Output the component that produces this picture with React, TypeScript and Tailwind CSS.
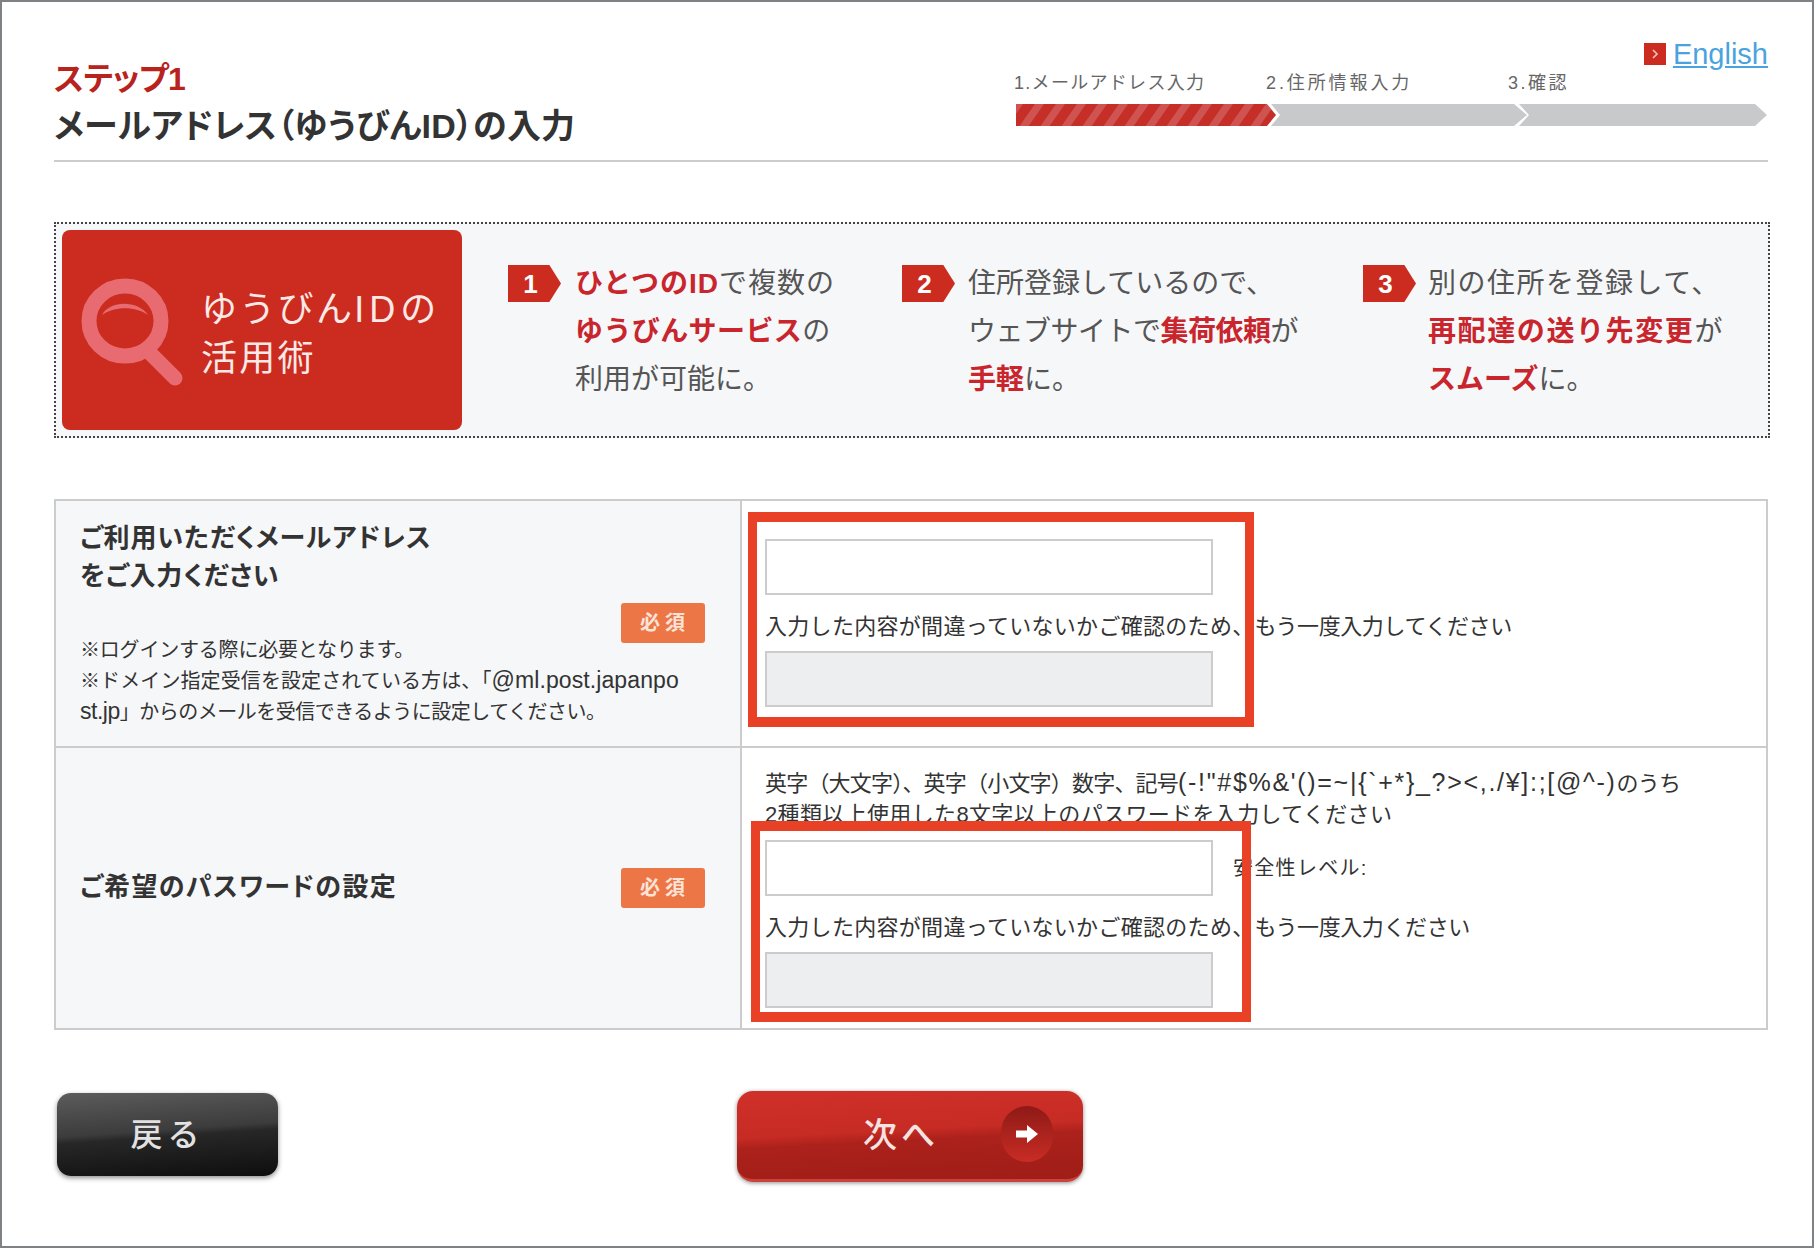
import React from 'react';

const Required = () => (
    <span className="flex w-[84px] h-[40px] items-center justify-center rounded-[3px] bg-[#ec7645] text-[20px] font-bold tracking-[5px] pl-[4px] text-[#fbe3d8]">必須</span>
);

const Num = ({ n }: { n: string }) => (
    <span className="mt-[5px] flex w-[53px] h-[37px] shrink-0 items-center justify-center pr-[8px] bg-[#cb2c1f] text-[26px] font-bold text-white [clip-path:polygon(0_0,78%_0,100%_50%,78%_100%,0_100%)]">{n}</span>
);

const R = ({ children }: { children: React.ReactNode }) => <b className="font-bold text-[#c9252d]">{children}</b>;

const inputBox = "block w-[448px] h-[56px] shrink-0 border-2 border-[#cccccc] bg-white";
const inputGrey = "block w-[448px] h-[56px] border-2 border-[#cccccc] bg-[#edeef0]";

const StepBar = () => (
    <svg width="754" height="22" viewBox="0 0 754 22" className="block">
        <defs>
            <pattern id="hatch" width="21" height="22" patternUnits="userSpaceOnUse" patternTransform="skewX(-35)">
                <rect width="21" height="22" fill="#c62f27" />
                <rect width="9" height="22" fill="#cf5350" />
            </pattern>
        </defs>
        <polygon points="505,0 741,0 753,11 741,22 505,22 515,11" fill="#c8c9cb" />
        <polygon points="257,0 500,0 513,11 500,22 257,22 266,11" fill="#c8c9cb" />
        <polygon points="2,0 253,0 262,11 253,22 2,22" fill="url(#hatch)" />
    </svg>
);

const App = () => {
    return (
        <div className="relative w-[1814px] h-[1248px] overflow-hidden box-border border-2 border-[#7f8284] bg-white pl-[52px] pr-[44px] font-['Liberation_Sans','Noto_Sans_CJK_JP',sans-serif] text-[#333333]">
            <header className="flex justify-between h-[160px] border-b-2 border-[#cccccc]">
                <div className="pt-[57px] [font-feature-settings:'palt']">
                    <div className="text-[32px] leading-[40px] font-bold tracking-[-0.6px] text-[#b8231e]">ステップ1</div>
                    <h1 className="mt-[4px] text-[34px] leading-[46px] font-bold tracking-[0.2px] text-[#333333]">メールアドレス（ゆうびんID）の入力</h1>
                </div>
                <div className="w-[754px] pt-[36px]">
                    <div className="flex h-[32px] items-center justify-end gap-[7px]">
                        <span className="flex w-[22px] h-[22px] items-center justify-center bg-[#cb2c1f]">
                            <svg width="8" height="12" viewBox="0 0 8 12" fill="none" stroke="#f3c3bd" strokeWidth="1.6"><path d="M2 2l4 4-4 4" /></svg>
                        </span>
                        <a className="text-[29px] leading-[32px] text-[#4aa3df] underline">English</a>
                    </div>
                    <div className="mt-[1px] flex h-[24px] items-center text-[18px] leading-[24px] text-[#666666]">
                        <span className="w-[252px] tracking-[1.3px]">1.メールアドレス入力</span>
                        <span className="w-[242px] tracking-[2.9px]">2.住所情報入力</span>
                        <span className="tracking-[2.5px]">3.確認</span>
                    </div>
                    <div className="mt-[9px]"><StepBar /></div>
                </div>
            </header>

            <section className="mt-[60px] flex w-[1716px] h-[216px] border-2 border-dotted border-[#444444] bg-[#f6f7f9] p-[6px] text-[28px] leading-[48px] text-[#555555]">
                <div className="flex w-[400px] h-[200px] items-center rounded-[8px] bg-[#cb2c1f] pl-[18px]">
                    <svg width="106" height="112" viewBox="0 0 106 112" fill="none" className="mt-[2px] shrink-0">
                        <ellipse cx="45" cy="46" rx="36" ry="35" stroke="#e76b70" strokeWidth="15" />
                        <path d="M70 78l25 25" stroke="#e76b70" strokeWidth="15" strokeLinecap="round" />
                        <path d="M22 40c8-15 36-15 46 0c-12-9-34-9-46 0z" fill="#e76b70" />
                    </svg>
                    <div className="ml-[15px] pt-[7px] text-[36px] leading-[49px] tracking-[2.3px] text-[#fbe9e7]">ゆうびん<span className="tracking-[5px]">ID</span>の<br />活用術</div>
                </div>
                <div className="ml-[46px] flex w-[394px] pt-[30px]">
                    <Num n="1" />
                    <p className="ml-[14px]">
                        <span className="block tracking-[1px]"><R>ひとつのID</R>で複数の</span>
                        <span className="block tracking-[0.4px]"><R>ゆうびんサービス</R>の</span>
                        <span className="block">利用が可能に。</span>
                    </p>
                </div>
                <div className="flex w-[461px] pt-[30px]">
                    <Num n="2" />
                    <p className="ml-[13px]">
                        <span className="block">住所登録しているので、</span>
                        <span className="block tracking-[-0.5px]">ウェブサイトで<R>集荷依頼</R>が</span>
                        <span className="block"><R>手軽</R>に。</span>
                    </p>
                </div>
                <div className="flex pt-[30px]">
                    <Num n="3" />
                    <p className="ml-[12px]">
                        <span className="block tracking-[1.500px]">別の住所を登録して、</span>
                        <span className="block tracking-[1.600px]"><R>再配達の送り先変更</R>が</span>
                        <span className="block"><R>スムーズ</R>に。</span>
                    </p>
                </div>
            </section>

            <section className="mt-[61px] w-[1714px] border-2 border-[#cccccc]">
                <div className="flex h-[247px] border-b-2 border-[#cccccc]">
                    <div className="w-[686px] shrink-0 border-r-2 border-[#cccccc] bg-[#f6f7f9] pl-[24px] pr-[35px] pt-[19px]">
                        <h2 className="text-[26px] leading-[37.5px] font-bold tracking-[0.9px] [font-feature-settings:'palt'] text-[#333333]">ご利用いただくメールアドレス<br />をご入力ください</h2>
                        <div className="mt-[8px] flex justify-end"><Required /></div>
                        <p className="mt-[-8px] text-[20px] leading-[30px] whitespace-nowrap">
                            <span className="block tracking-[-0.2px]">※ログインする際に必要となります。</span>
                            <span className="block tracking-[0.1px]">※ドメイン指定受信を設定されている方は、「<span className="text-[23px]">@ml.post.japanpo</span></span>
                            <span className="block tracking-[-0.5px]"><span className="text-[23px]">st.jp</span>」からのメールを受信できるように設定してください。</span>
                        </p>
                    </div>
                    <div className="relative flex-1 pl-[23px] pt-[38px] text-[22px] leading-[30px]">
                        <div className={inputBox} />
                        <p className="mt-[17px] whitespace-nowrap"><span className="tracking-[0.3px]">入力した内容が間違っていないかご確認のため、</span><span className="tracking-[-0.4px]">もう一度入力してください</span></p>
                        <div className={`mt-[9px] ${inputGrey}`} />
                        <div className="absolute left-[6px] top-[11px] w-[506px] h-[215px] border-x-[9px] border-y-[10px] border-[#e94125]" />
                    </div>
                </div>
                <div className="flex h-[280px]">
                    <div className="flex w-[686px] shrink-0 items-center justify-between border-r-2 border-[#cccccc] bg-[#f6f7f9] pl-[24px] pr-[35px]">
                        <h2 className="text-[26px] leading-[37.5px] font-bold tracking-[1.4px] [font-feature-settings:'palt'] text-[#333333]">ご希望のパスワードの設定</h2>
                        <Required />
                    </div>
                    <div className="relative flex-1 pl-[23px] pt-[19px] text-[22px] leading-[31px]">
                        <p className="whitespace-nowrap">
                            <span className="block tracking-[-0.8px]">英字（大文字）、英字（小文字）数字、記号<span className="text-[25px] tracking-[1.7px]">(-!"#$%&'()=~|{'{'}`+*{'}'}_?&gt;&lt;,./¥]:;[@^-)</span>のうち</span>
                            <span className="block tracking-[0.35px]">2種類以上使用した8文字以上のパスワードを入力してください</span>
                        </p>
                        <div className="mt-[10px] flex items-center gap-[20px]">
                            <div className={inputBox} />
                            <span className="text-[20px] tracking-[1.3px]">安全性レベル:</span>
                        </div>
                        <p className="mt-[16px] whitespace-nowrap"><span className="tracking-[0.3px]">入力した内容が間違っていないかご確認のため、</span><span className="tracking-[-0.4px]">もう一度入力ください</span></p>
                        <div className={`mt-[9px] ${inputGrey}`} />
                        <div className="absolute left-[9px] top-[73px] w-[500px] h-[201px] border-x-[9px] border-y-[10px] border-[#e94125]" />
                    </div>
                </div>
            </section>

            <div className="mt-[63px] flex items-start pl-[3px]">
                <button className="w-[221px] h-[83px] rounded-[14px] bg-[linear-gradient(176deg,#5c5c5c_0%,#3c3c3c_45%,#272727_52%,#0e0e0e_100%)] text-[32px] font-medium tracking-[5px] text-[#e2e2e2] shadow-[0_2px_5px_rgba(0,0,0,0.45)]">戻る</button>
                <button className="relative ml-[459px] mt-[-2px] w-[346px] h-[91px] rounded-[16px] border-b-[3px] border-[#c9433d] bg-[linear-gradient(177deg,#d0302a_0%,#c62b24_45%,#ac211b_55%,#9f1d18_100%)] pr-[18px] text-[34px] font-medium tracking-[4px] text-[#f5e3e1] shadow-[0_1px_4px_rgba(0,0,0,0.45)]">
                    次へ
                    <span className="absolute left-[264px] top-[15px] flex w-[52px] h-[56px] items-center justify-center rounded-full bg-[linear-gradient(180deg,#8e1a16,#c92c25)]">
                        <svg width="24" height="24" viewBox="0 0 24 24" fill="#ffffff"><path d="M1 8.500h11V3l11 9-11 9v-5.500H1z" /></svg>
                    </span>
                </button>
            </div>
        </div>
    );
};

export default App;
